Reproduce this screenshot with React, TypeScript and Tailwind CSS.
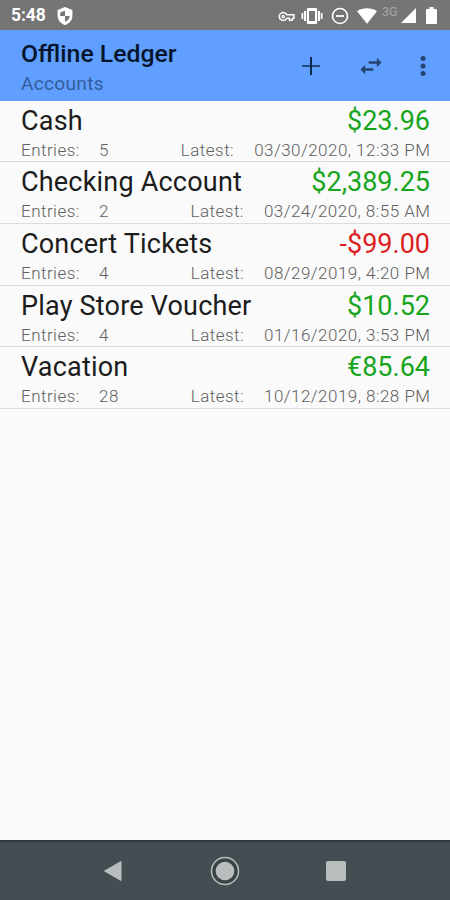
import React from "react";

type Account = {
  name: string;
  amount: string;
  negative?: boolean;
  entries: string;
  latest: string;
};

const accounts: Account[] = [
  { name: "Cash", amount: "$23.96", entries: "5", latest: "03/30/2020, 12:33 PM" },
  { name: "Checking Account", amount: "$2,389.25", entries: "2", latest: "03/24/2020, 8:55 AM" },
  { name: "Concert Tickets", amount: "-$99.00", negative: true, entries: "4", latest: "08/29/2019, 4:20 PM" },
  { name: "Play Store Voucher", amount: "$10.52", entries: "4", latest: "01/16/2020, 3:53 PM" },
  { name: "Vacation", amount: "€85.64", entries: "28", latest: "10/12/2019, 8:28 PM" },
];

function StatusBar() {
  return (
    <div className="flex h-[30px] shrink-0 items-center bg-[#757575] pl-[11px] pr-[12px] text-white">
      <span className="w-[46px] pt-[2px] text-[17.500px] font-bold leading-none tracking-[-0.1px]">5:48</span>
      <svg className="mt-[1px] h-[18px] w-[16px]" viewBox="0 0 16 18">
        <path fill="white" d="M8 0L0.6 3v6c0 4 3.1 7.7 7.4 9 4.3-1.3 7.4-5 7.4-9V3z" />
        <path fill="#757575" d="M8 3.800v5.300H3.200V5.600zM8 9.100h4.800c-.3 2.700-2.200 4.800-4.800 5.800z" />
      </svg>
      <div className="flex-1" />
      <svg className="mt-[2px] h-[11px] w-[17px]" viewBox="0 0 17 11" fill="none" stroke="white" strokeWidth="1.500" strokeLinejoin="round">
        <path d="M8.800 3.700A4 3.900 0 1 0 8.800 7.300H11.400V9.300H14.400V7.300H16V3.700z" />
        <circle cx="5.200" cy="5.500" r="1.200" strokeWidth="1.300" />
      </svg>
      <svg className="ml-[6px] mt-[1px] h-[18px] w-[22px]" viewBox="0 0 22 18">
        <path fill="white" d="M0.500 6h1.700v6H.5zM3 4h2v10H3zM17 4h2v10h-2zM19.800 6h1.700v6h-1.700z" />
        <path fill="white" fillRule="evenodd" d="M7.300 1h7.400a1.500 1.500 0 0 1 1.500 1.500v13a1.500 1.500 0 0 1-1.500 1.500H7.300a1.500 1.500 0 0 1-1.500-1.500v-13A1.500 1.500 0 0 1 7.300 1zM8 4v10h6V4z" />
      </svg>
      <svg className="ml-[8px] mt-[1px] h-[18px] w-[18px]" viewBox="0 0 18 18" fill="none" stroke="white">
        <circle cx="9" cy="9" r="7.500" strokeWidth="1.600" />
        <path d="M5 9h8" strokeWidth="1.800" />
      </svg>
      <svg className="ml-[8px] mt-[1px] h-[16px] w-[20px]" viewBox="0 0 20 16">
        <path fill="white" d="M0 3.200C5.500-.6 14.500-.6 20 3.200L10 15.700z" />
      </svg>
      <span className="ml-[5px] mb-[5px] w-[19px] text-[12.500px] leading-none text-[#a5a5a5]">3G</span>
      <svg className="mt-[1px] h-[15px] w-[15px]" viewBox="0 0 15 15">
        <path fill="white" d="M15 0v15H0z" />
      </svg>
      <svg className="ml-[10px] mr-[1px] h-[17px] w-[11px]" viewBox="0 0 11 17">
        <path fill="white" d="M3.500 0h4v2H9.800Q11 2 11 3.200V16Q11 17 10 17H1Q0 17 0 16V3.200Q0 2 1.200 2H3.500z" />
      </svg>
    </div>
  );
}

function AppBar() {
  return (
    <header className="flex h-[70.500px] shrink-0 bg-[#609fff] pl-[21px] pr-[24px]">
      <div className="flex-1 pt-[9px]">
        <h1 className="whitespace-nowrap text-[24.800px] font-medium leading-[30px] text-[#06152c]">Offline Ledger</h1>
        <p className="text-[19.200px] leading-[30px] tracking-[0.25px] text-[#345d9d]">Accounts</p>
      </div>
      <div className="flex h-[71px] items-center">
        <svg className="h-[18px] w-[18px]" viewBox="0 0 18 18">
          <path fill="#25477b" d="M0 8h18v2H0z" />
          <path fill="#10294f" d="M8 0h2v18H8z" />
        </svg>
        <svg className="ml-[37px] h-[28px] w-[28px]" viewBox="0 0 24 24" fill="#25446f">
          <path d="M6.990 11L3 15l3.990 4v-3H14v-2H6.990v-3zM21 9l-3.990-4v3H10v2h7.010v3L21 9z" />
        </svg>
        <svg className="ml-[35px] h-[20px] w-[6px]" viewBox="0 0 6 20" fill="#25446f">
          <circle cx="3" cy="2.500" r="2.500" />
          <circle cx="3" cy="10" r="2.500" />
          <circle cx="3" cy="17.500" r="2.500" />
        </svg>
      </div>
    </header>
  );
}

function AccountRow({ account }: { account: Account }) {
  return (
    <li className="flex h-[61.700px] flex-col border-b-[1.500px] border-[#dcdcdc] pl-[21px] pr-[20px]">
      <div className="flex h-[38px] items-center justify-between whitespace-nowrap pt-[2px] text-[27px] leading-[38px]">
        <span className="tracking-[0.2px] text-[#1c1c1c]">{account.name}</span>
        <span className={account.negative ? "text-[#dc1f1f]" : "text-[#18a51e]"}>{account.amount}</span>
      </div>
      <div className="flex h-[22px] items-center whitespace-nowrap text-[17px] font-light leading-[22px] tracking-[0.47px] text-[#606060]">
        <span className="w-[78px]">Entries:</span>
        <span>{account.entries}</span>
        <span className="ml-auto mr-[20px]">Latest:</span>
        <span className="-mr-[0.5px]">{account.latest}</span>
      </div>
    </li>
  );
}

function NavigationBar() {
  return (
    <nav className="flex h-[60px] shrink-0 items-center border-t-2 border-[#2e3a3c] bg-[#464d52] pl-[103px]">
      <svg className="h-[22px] w-[19px]" viewBox="0 0 19 22">
        <path fill="#b8bebe" stroke="#b8bebe" strokeLinejoin="round" d="M18 1.500v19L1.500 11z" />
      </svg>
      <svg className="ml-[88px] h-[30px] w-[30px]" viewBox="0 0 30 30">
        <circle cx="15" cy="15" r="13.500" fill="#3b4346" stroke="#b8bebe" strokeWidth="1.500" />
        <circle cx="15" cy="15" r="9.300" fill="#b8bebe" />
      </svg>
      <div className="ml-[86px] h-[20px] w-[20px] rounded-[2px] bg-[#b8bebe]" />
    </nav>
  );
}

export default function App() {
  return (
    <div className="flex h-[900px] w-[450px] flex-col overflow-hidden bg-[#fafafa] font-[Roboto,sans-serif]">
      <StatusBar />
      <AppBar />
      <ul className="flex-1">
        {accounts.map((account) => (
          <AccountRow key={account.name} account={account} />
        ))}
      </ul>
      <NavigationBar />
    </div>
  );
}
